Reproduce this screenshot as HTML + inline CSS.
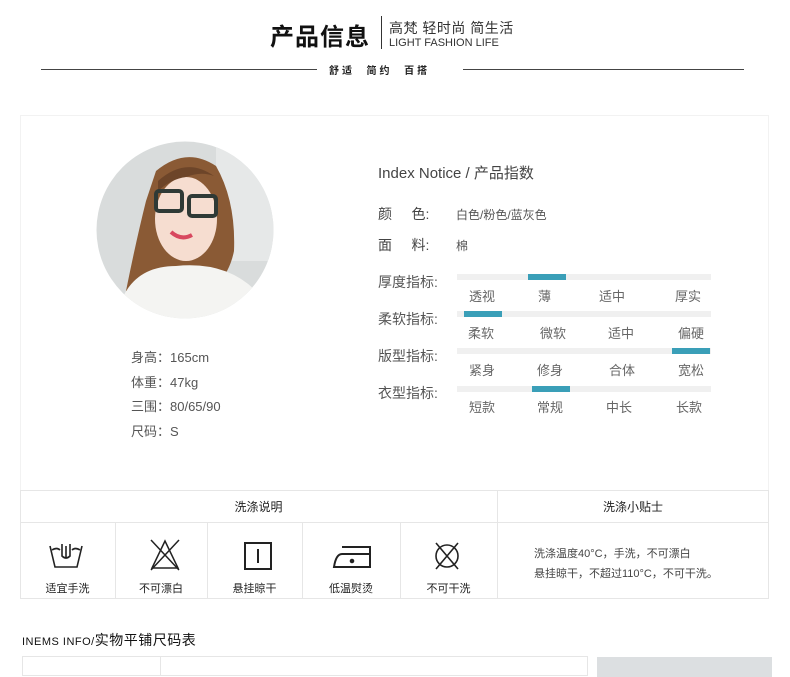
<!DOCTYPE html>
<html><head><meta charset="utf-8"><style>
*{margin:0;padding:0;box-sizing:border-box}
body{width:790px;height:666px;background:#fff;position:relative;overflow:hidden;font-family:"Liberation Sans","Noto Sans CJK SC",sans-serif;color:#333}
.a{position:absolute;white-space:nowrap}
.track{position:absolute;left:457px;width:254px;height:6px;background:#f0f0f0}
.bar{position:absolute;top:0;height:6px;width:38px;background:#3a9fb8}
.lab{position:absolute;font-size:14px;color:#555}
.opt{position:absolute;font-size:13px;color:#666}
.ic{position:absolute;font-size:11px;color:#222;text-align:center}
</style></head><body>
<div class="a" style="left:270px;top:17px;font-size:24px;font-weight:bold;color:#111;letter-spacing:1px">产品信息</div>
<div class="a" style="left:381px;top:16px;width:1px;height:33px;background:#333"></div>
<div class="a" style="left:389px;top:18px;font-size:14px;color:#333;letter-spacing:0.5px">高梵 轻时尚 简生活</div>
<div class="a" style="left:389px;top:37px;font-size:11px;color:#333">LIGHT FASHION LIFE</div>
<div class="a" style="left:41px;top:69px;width:276px;height:1px;background:#444"></div>
<div class="a" style="left:463px;top:69px;width:281px;height:1px;background:#444"></div>
<div class="a" style="left:329px;top:62px;font-size:10px;font-weight:bold;color:#222;letter-spacing:3px">舒适&nbsp;&nbsp;简约&nbsp;&nbsp;百搭</div>

<div class="a" style="left:20px;top:115px;width:749px;height:376px;border:1px solid #f2f2f2;border-bottom:none"></div>
<svg class="a" style="left:96px;top:141px" width="178" height="178" viewBox="0 0 178 178">
<defs><clipPath id="c"><circle cx="89" cy="89" r="88.5"/></clipPath></defs>
<g clip-path="url(#c)">
<rect width="178" height="178" fill="#d9dcdc"/>
<rect x="120" y="0" width="58" height="120" fill="#e6e8e8"/>
<path d="M60 30 Q90 5 120 25 Q140 60 138 110 Q130 150 90 160 Q50 150 30 150 Q40 100 50 60Z" fill="#8a5a35"/>
<ellipse cx="90" cy="78" rx="31" ry="42" fill="#f6ddd0"/>
<path d="M62 40 Q90 15 118 35 Q105 30 90 36 Q75 38 62 50Z" fill="#6d4529"/>
<rect x="60" y="50" width="26" height="20" rx="3" fill="none" stroke="#2f3a36" stroke-width="4"/>
<rect x="93" y="55" width="27" height="20" rx="3" fill="none" stroke="#2f3a36" stroke-width="4"/>
<path d="M75 91 Q85 100 96 94" stroke="#d8485f" stroke-width="4" fill="none"/>
<path d="M20 178 Q30 125 80 125 Q130 120 160 150 L170 178Z" fill="#f4f4f2"/>
</g></svg>
<div class="a" style="left:131px;top:346px;font-size:13px;color:#555;line-height:24.5px">身高：165cm<br>体重：47kg<br>三围：80/65/90<br>尺码：S</div>

<div class="a" style="left:378px;top:162px;font-size:15px;color:#444">Index Notice / 产品指数</div>
<div class="a" style="left:378px;top:204px;font-size:14px;color:#444">颜&nbsp;&nbsp;&nbsp;&nbsp;&nbsp;色:</div>
<div class="a" style="left:456px;top:206px;font-size:12px;color:#555">白色/粉色/蓝灰色</div>
<div class="a" style="left:378px;top:235px;font-size:14px;color:#444">面&nbsp;&nbsp;&nbsp;&nbsp;&nbsp;料:</div>
<div class="a" style="left:456px;top:237px;font-size:12px;color:#555">棉</div>

<div class="lab" style="left:378px;top:272px">厚度指标:</div>
<div class="track" style="top:274px"><div class="bar" style="left:71px"></div></div>
<div class="opt" style="left:469px;top:286px">透视</div><div class="opt" style="left:538px;top:286px">薄</div><div class="opt" style="left:599px;top:286px">适中</div><div class="opt" style="left:675px;top:286px">厚实</div>
<div class="lab" style="left:378px;top:309px">柔软指标:</div>
<div class="track" style="top:311px"><div class="bar" style="left:7px"></div></div>
<div class="opt" style="left:468px;top:323px">柔软</div><div class="opt" style="left:540px;top:323px">微软</div><div class="opt" style="left:608px;top:323px">适中</div><div class="opt" style="left:678px;top:323px">偏硬</div>
<div class="lab" style="left:378px;top:346px">版型指标:</div>
<div class="track" style="top:348px"><div class="bar" style="left:215px"></div></div>
<div class="opt" style="left:469px;top:360px">紧身</div><div class="opt" style="left:537px;top:360px">修身</div><div class="opt" style="left:609px;top:360px">合体</div><div class="opt" style="left:678px;top:360px">宽松</div>
<div class="lab" style="left:378px;top:383px">衣型指标:</div>
<div class="track" style="top:386px"><div class="bar" style="left:75px"></div></div>
<div class="opt" style="left:469px;top:397px">短款</div><div class="opt" style="left:537px;top:397px">常规</div><div class="opt" style="left:606px;top:397px">中长</div><div class="opt" style="left:676px;top:397px">长款</div>

<div class="a" style="left:20px;top:490px;width:749px;height:109px;border:1px solid #e6e6e6"></div>
<div class="a" style="left:20px;top:522px;width:749px;height:1px;background:#e6e6e6"></div>
<div class="a" style="left:497px;top:490px;width:1px;height:109px;background:#e6e6e6"></div>
<div class="a" style="left:115px;top:522px;width:1px;height:77px;background:#e6e6e6"></div>
<div class="a" style="left:207px;top:522px;width:1px;height:77px;background:#e6e6e6"></div>
<div class="a" style="left:302px;top:522px;width:1px;height:77px;background:#e6e6e6"></div>
<div class="a" style="left:400px;top:522px;width:1px;height:77px;background:#e6e6e6"></div>
<div class="a" style="left:20px;top:498px;width:477px;text-align:center;font-size:12px;color:#222">洗涤说明</div>
<div class="a" style="left:497px;top:498px;width:272px;text-align:center;font-size:12px;color:#222">洗涤小贴士</div>
<div class="a" style="left:534px;top:544px;font-size:11px;color:#444;line-height:20px">洗涤温度40°C，手洗，不可漂白<br>悬挂晾干，不超过110°C，不可干洗。</div>

<svg class="a" style="left:48px;top:540px" width="36" height="30" viewBox="0 0 36 30" fill="none" stroke="#222" stroke-width="1.6"><path d="M2 6 L7 27 H29 L34 6"/><path d="M4 10 Q9 7 12 10 M24 10 Q27 7 32 10"/><path d="M14 4 V16 Q18 20 22 16 V4 M18 6 V18"/></svg>
<div class="ic" style="left:20px;top:580px;width:95px">适宜手洗</div>
<svg class="a" style="left:149px;top:538px" width="32" height="34" viewBox="0 0 32 34" fill="none" stroke="#222" stroke-width="1.5"><path d="M16 3 L3 30 H29 Z"/><path d="M2 2 L30 32 M30 2 L2 32"/></svg>
<div class="ic" style="left:115px;top:580px;width:92px">不可漂白</div>
<svg class="a" style="left:243px;top:541px" width="30" height="30" viewBox="0 0 30 30" fill="none" stroke="#222" stroke-width="2"><rect x="2" y="2" width="26" height="26"/><path d="M15 8 V22"/></svg>
<div class="ic" style="left:207px;top:580px;width:95px">悬挂晾干</div>
<svg class="a" style="left:332px;top:544px" width="42" height="26" viewBox="0 0 42 26" fill="none" stroke="#222" stroke-width="2"><path d="M10 3 H38 V23 H2 Q4 10 10 10 H38"/><circle cx="20" cy="17" r="1.3" fill="#222"/></svg>
<div class="ic" style="left:302px;top:580px;width:98px">低温熨烫</div>
<svg class="a" style="left:433px;top:541px" width="28" height="30" viewBox="0 0 28 30" fill="none" stroke="#222" stroke-width="1.6"><circle cx="14" cy="15" r="11"/><path d="M3 2 L25 28 M25 2 L3 28"/></svg>
<div class="ic" style="left:400px;top:580px;width:97px">不可干洗</div>

<div class="a" style="left:22px;top:630px;font-size:11px;color:#111;letter-spacing:0.5px">INEMS INFO/<span style="font-size:14px">实物平铺尺码表</span></div>
<div class="a" style="left:22px;top:656px;width:566px;height:20px;border:1px solid #e6e6e6"></div>
<div class="a" style="left:160px;top:656px;width:1px;height:20px;background:#e6e6e6"></div>
<div class="a" style="left:597px;top:657px;width:175px;height:20px;background:#dcdfe1"></div>
</body></html>
